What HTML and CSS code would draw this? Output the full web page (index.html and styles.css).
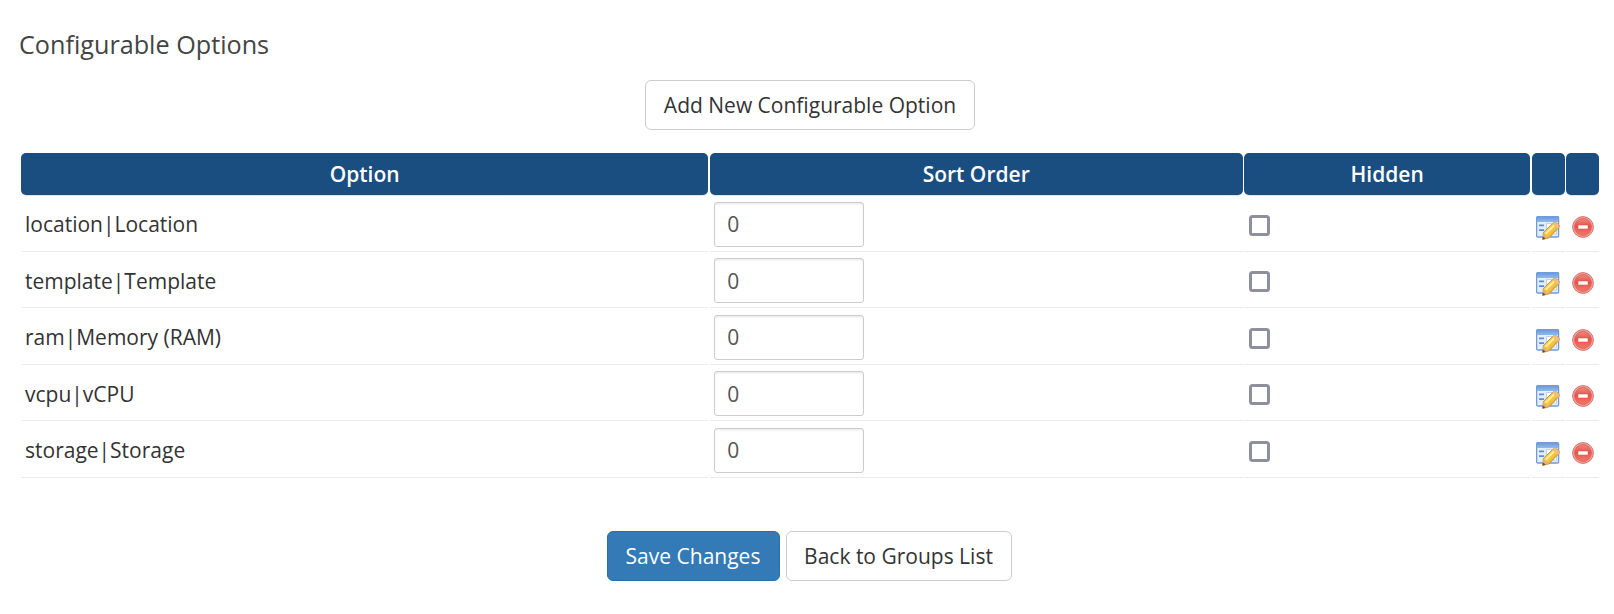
FILE: index.html
```html
<!DOCTYPE html>
<html lang="en">
<head>
<meta charset="utf-8">
<title>Configurable Options</title>
<link rel="stylesheet" href="styles.css">
</head>
<body>
<svg width="0" height="0" class="defs" aria-hidden="true">
  <defs>
    <linearGradient id="g-bar" x1="0" y1="0" x2="0" y2="1"><stop offset="0" stop-color="#6a9be0"/><stop offset="1" stop-color="#94bae8"/></linearGradient>
    <linearGradient id="g-pencil" x1="0" y1="0" x2="1" y2="1"><stop offset="0" stop-color="#fbe27a"/><stop offset=".5" stop-color="#f3c843"/><stop offset="1" stop-color="#cf8f2b"/></linearGradient>
    <linearGradient id="g-red" x1="0" y1="0" x2="0" y2="1"><stop offset="0" stop-color="#ec8a82"/><stop offset=".45" stop-color="#e5544a"/><stop offset="1" stop-color="#f3796a"/></linearGradient>
    <symbol id="edit" viewBox="0 0 24 24">
      <rect x=".6" y=".6" width="22" height="20.4" rx="1.2" fill="#e3eefc" stroke="#6f9bd8" stroke-width="1.3"/>
      <rect x="1" y="1" width="21.2" height="5" fill="url(#g-bar)"/>
      <rect x="10.5" y="7.5" width="10" height="10.5" fill="#fff" stroke="#c5d2e2" stroke-width="1"/>
      <path d="M3 9.3h5M3 14.2h5" stroke="#5c8cd6" stroke-width="1.7"/>
      <path d="M7.4 16.4 17.6 6.6q1.4-1.1 2.8 0l2.5 2.4q1 1.2 0 2.4L13.2 21.7l-6.4 1.8z" fill="url(#g-pencil)" stroke="#c48f45" stroke-width="1"/>
      <path d="M9.8 17.6 18.4 9.2" stroke="#fff09a" stroke-width="1.8"/>
      <path d="M17.6 6.6q1.4-1.1 2.8 0l2.5 2.4q1 1.2 0 2.4l-1.4 1.4-5.3-4.9z" fill="#f1bd7c"/>
      <path d="m7.4 16.8 5.2 4.9-5.8 1.8z" fill="#e2b27a"/>
      <path d="m6.9 20.4 2.8 2.2-3.3 1z" fill="#6e4a2c"/>
    </symbol>
    <symbol id="delete" viewBox="0 0 22 22">
      <circle cx="11" cy="11" r="10.4" fill="#f3a49c" stroke="#d5736c" stroke-width="1"/>
      <circle cx="11" cy="11" r="8.4" fill="url(#g-red)" stroke="#dc5c52" stroke-width=".8"/>
      <rect x="6" y="9.1" width="10" height="3.8" rx=".4" fill="#fff" stroke="#d8594f" stroke-width=".5"/>
    </symbol>
  </defs>
</svg>
<main class="page">
  <h2 class="title">Configurable Options</h2>
  <div class="actions"><button class="btn add">Add New Configurable Option</button></div>
  <div class="grid">
    <div class="row head"><div>Option</div><div>Sort Order</div><div>Hidden</div><div></div><div></div></div>
    <div class="row"><div>location|Location</div><div><input class="order" type="text" value="0"></div><div><span class="check"></span></div><div><svg class="edit"><use href="#edit"/></svg></div><div><svg class="delete"><use href="#delete"/></svg></div></div>
    <div class="row"><div>template|Template</div><div><input class="order" type="text" value="0"></div><div><span class="check"></span></div><div><svg class="edit"><use href="#edit"/></svg></div><div><svg class="delete"><use href="#delete"/></svg></div></div>
    <div class="row"><div>ram|Memory (RAM)</div><div><input class="order" type="text" value="0"></div><div><span class="check"></span></div><div><svg class="edit"><use href="#edit"/></svg></div><div><svg class="delete"><use href="#delete"/></svg></div></div>
    <div class="row"><div>vcpu|vCPU</div><div><input class="order" type="text" value="0"></div><div><span class="check"></span></div><div><svg class="edit"><use href="#edit"/></svg></div><div><svg class="delete"><use href="#delete"/></svg></div></div>
    <div class="row"><div>storage|Storage</div><div><input class="order" type="text" value="0"></div><div><span class="check"></span></div><div><svg class="edit"><use href="#edit"/></svg></div><div><svg class="delete"><use href="#delete"/></svg></div></div>
  </div>
  <div class="actions footer"><button class="btn primary">Save Changes</button><button class="btn back">Back to Groups List</button></div>
</main>
</body>
</html>
```
FILE: styles.css
```css
* { box-sizing: border-box; }
body {
  margin: 0;
  background: #fff;
  color: #333;
  font: 21px/30px "Open Sans", "Noto Sans", sans-serif;
}
.defs { display: block; height: 0; }
.page { padding: 27px 14px 0 19px; }
.title {
  margin: 0 0 19px;
  font-size: 25.2px;
  font-weight: 400;
  line-height: 34px;
  color: #444;
}
.actions { display: flex; justify-content: center; gap: 6px; padding-left: 1px; }
.btn {
  height: 50px;
  padding: 0;
  border: 1px solid #ccc;
  border-radius: 6px;
  background: #fff;
  color: #333;
  font: inherit;
}
.add { width: 330px; }
.back { width: 226px; }
.primary { width: 173px; background: #337ab7; border-color: #2e6da4; color: #fff; }
.grid {
  display: flex;
  flex-direction: column;
  gap: 1.5px;
  margin: 23px 0 0 2px;
}
.row {
  display: grid;
  grid-template-columns: 687.2px 533px 286px 33px 33px;
  column-gap: 1.5px;
  height: 55px;
}
.row > div {
  display: flex;
  align-items: center;
  padding: 1px 4px 0;
  border-bottom: 1px solid #ebebeb;
}
.head { height: 42px; }
.head > div {
  justify-content: center;
  padding-top: 0;
  border: 0;
  border-radius: 5px;
  background: #1a4d80;
  box-shadow: 0 1px 0 -.3px #d5dce4;
  color: #fff;
  font-weight: 600;
}
.order {
  width: 150px;
  height: 45px;
  padding: 0 12.5px;
  border: 1px solid #ccc;
  border-radius: 3px;
  background: #fff;
  box-shadow: inset 0 1.5px 1.5px rgba(0, 0, 0, .075);
  color: #555;
  font: inherit;
}
.check {
  width: 21px;
  height: 21px;
  margin: 2px 0 0 .5px;
  border: 3px solid #8f8f9d;
  border-radius: 3.5px;
}
.edit { flex: none; width: 24px; height: 24px; margin-top: 7px; }
.delete { flex: none; width: 22px; height: 22px; margin: 5px 0 0 1.5px; }
.footer { margin-top: 53px; padding: 0 1px 0 0; }
```
